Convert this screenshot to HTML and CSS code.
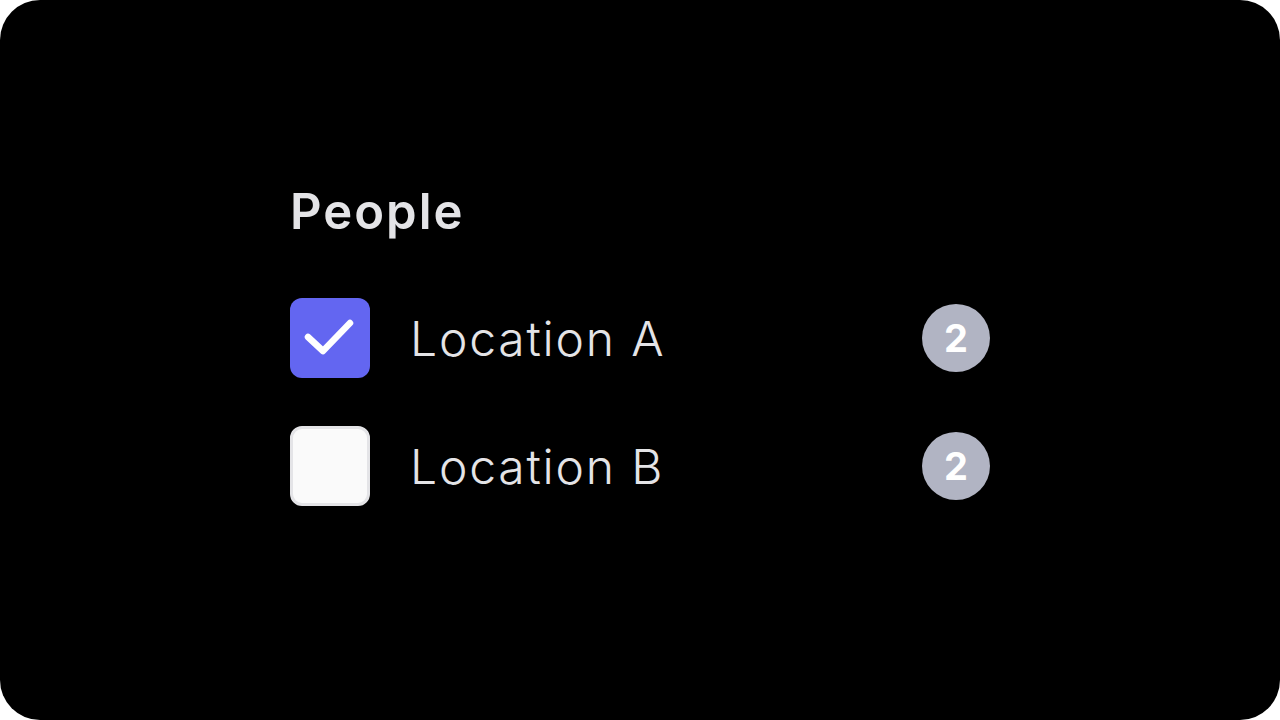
FILE: index.html
```html
<!DOCTYPE html>
<html>
<head>
<meta charset="utf-8">
<link rel="stylesheet" href="styles.css">
</head>
<body>
<div class="frame">
  <div class="panel">
    <h2 class="title">People</h2>
    <ul class="list">
      <li class="row">
        <span class="box box-checked">
          <svg class="check" width="80" height="80" viewBox="0 0 80 80"><path d="M18 39 L33 53 L60 25" fill="none" stroke="#fff" stroke-width="6.5" stroke-linecap="round" stroke-linejoin="round"/></svg>
        </span>
        <span class="label">Location A</span>
        <span class="badge">2</span>
      </li>
      <li class="row">
        <span class="box box-empty"></span>
        <span class="label">Location B</span>
        <span class="badge">2</span>
      </li>
    </ul>
  </div>
</div>
</body>
</html>
```
FILE: styles.css
```css
html, body {
  margin: 0;
  padding: 0;
  background: #ffffff;
}
.frame {
  width: 1280px;
  height: 720px;
  background: #000;
  border-radius: 40px;
  display: flex;
  justify-content: center;
  align-items: flex-start;
  font-family: "Inter", "Noto Sans", sans-serif;
}
.panel {
  width: 700px;
  padding-top: 180px;
}
.title {
  margin: 0 0 54px 0;
  font-size: 49px;
  line-height: 64px;
  font-weight: 600;
  color: #e4e4e7;
  letter-spacing: 2px;
}
.list {
  list-style: none;
  margin: 0;
  padding: 0;
  display: flex;
  flex-direction: column;
  gap: 48px;
}
.row {
  display: flex;
  align-items: center;
  height: 80px;
}
.box {
  width: 80px;
  height: 80px;
  border-radius: 12px;
  box-sizing: border-box;
  display: block;
  flex: none;
}
.check {
  display: block;
}
.box-checked {
  background: #6366f1;
}
.box-empty {
  background: #fafafa;
  border: 3px solid #e4e4e7;
}
.label {
  margin-left: 40px;
  flex: 1;
  font-size: 48px;
  font-weight: 300;
  color: #e4e4e7;
  letter-spacing: 1.8px;
}
.badge {
  width: 68px;
  height: 68px;
  border-radius: 50%;
  background: #b1b4c3;
  color: #fff;
  font-weight: 700;
  font-size: 38px;
  display: flex;
  align-items: center;
  justify-content: center;
  flex: none;
}
```
